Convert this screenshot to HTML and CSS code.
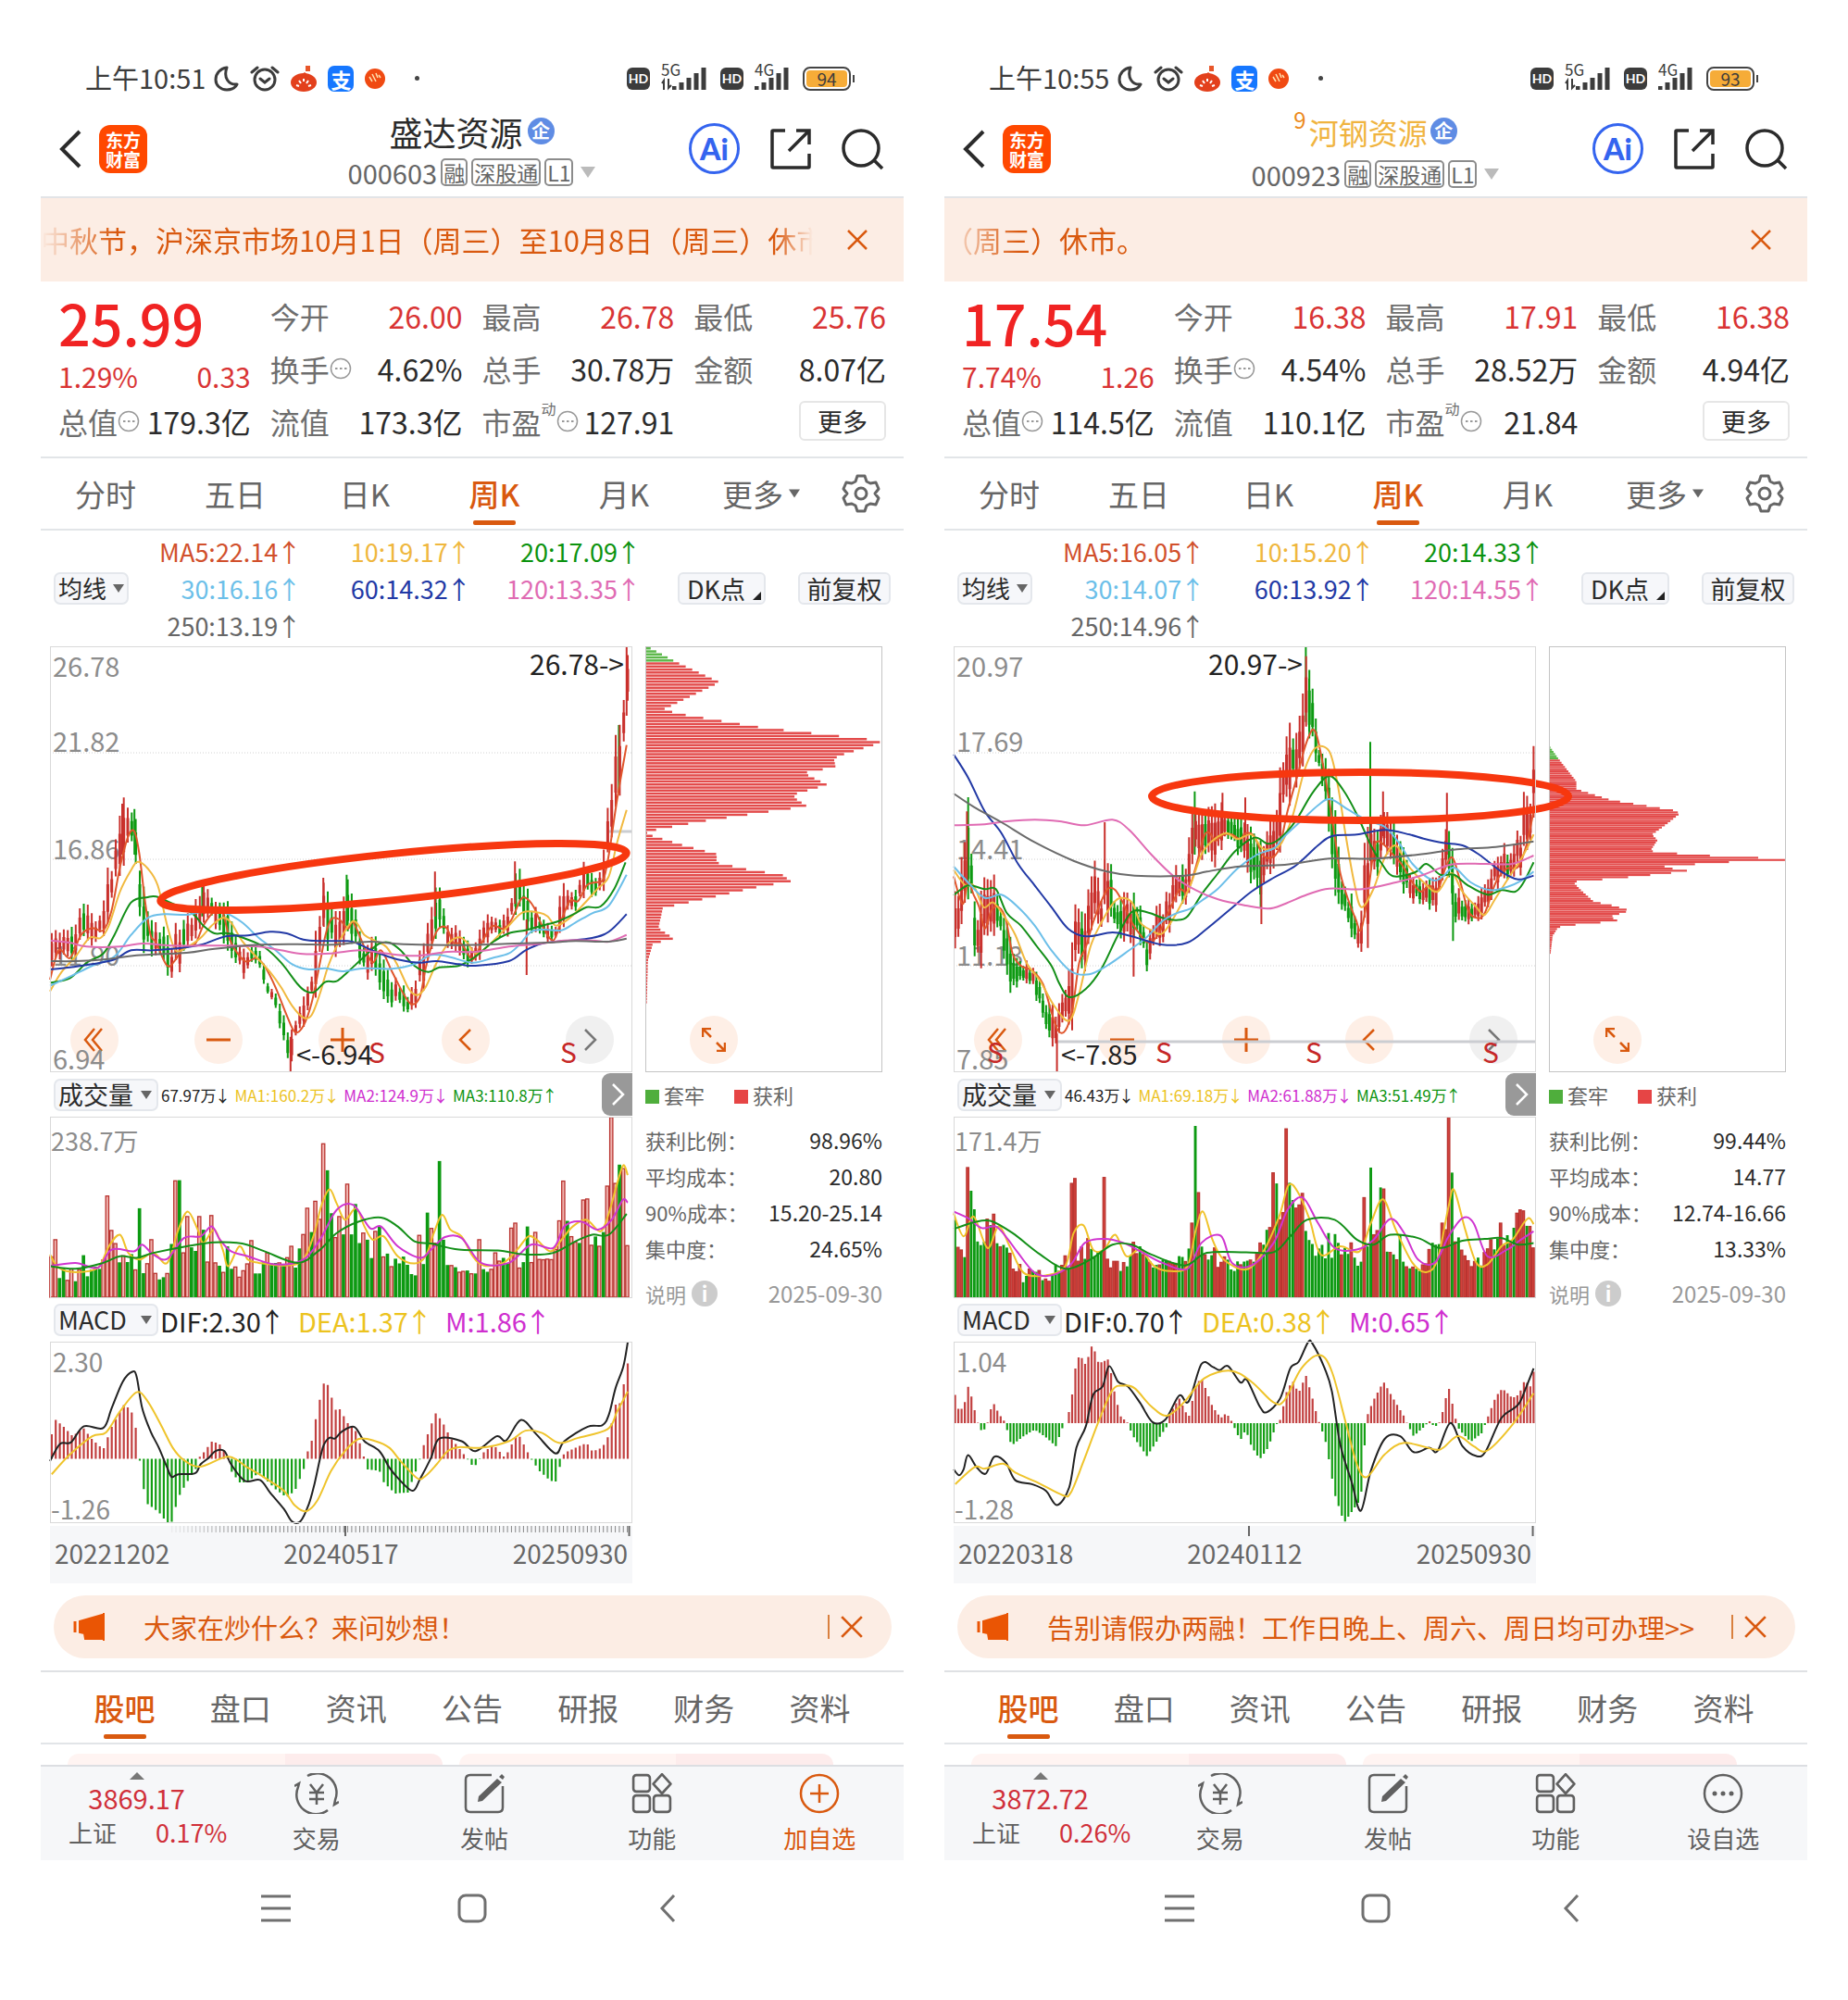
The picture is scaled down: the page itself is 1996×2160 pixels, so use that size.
FILE: index.html
```html
<!DOCTYPE html>
<html lang="zh-CN">
<head>
<meta charset="utf-8">
<title>个股行情对比</title>
<link rel="stylesheet" href="styles.css">
</head>
<body>
<svg class="sprite" aria-hidden="true">
  <symbol id="moon" viewBox="0 0 28 28"><path d="M15 2C8 3 3 8 3 15c0 6 5 11 12 11 5 0 9-2 11-6-9 1-15-7-11-18z" fill="none" stroke="currentColor" stroke-width="3" stroke-linejoin="round"/></symbol>
  <symbol id="alarm" viewBox="0 0 32 28"><g fill="none" stroke="currentColor" stroke-width="3" stroke-linecap="round"><circle cx="16" cy="15" r="11"/><path d="M2 7l6-5M30 7l-6-5M11 14l5 4 5-4"/></g></symbol>
  <symbol id="bag" viewBox="0 0 28 28"><path d="M16 0h5v6h-5z" fill="#e8562a"/><ellipse cx="14" cy="18" rx="14" ry="10" fill="#e3401c"/><path d="M10 11l5-4 5 4z" fill="#e3401c"/><path d="M6 21l3 1M9 16l2 3M14 14v3M19 16l-2 3M22 21l-3 1" stroke="#fff" stroke-width="2"/></symbol>
  <symbol id="pulse" viewBox="0 0 22 22"><circle cx="11" cy="11" r="11" fill="#f04a12"/><path d="M5 9l3 5M8 6l4 8M12 5l2 5M15 7l2 3" stroke="#ffe2b0" stroke-width="1.500" fill="none"/></symbol>
  <symbol id="signal" viewBox="0 0 40 26"><path d="M2 21v4M10 17v8M18 12v13M26 7v18M34 1v24" stroke="currentColor" stroke-width="5"/></symbol>
  <symbol id="updown" viewBox="0 0 12 14"><path d="M3 13V3L1 6M8 1v10l3-3" fill="none" stroke="currentColor" stroke-width="2"/></symbol>
  <symbol id="back" viewBox="0 0 24 42"><path d="M22 2L3 21l19 19" fill="none" stroke="currentColor" stroke-width="4"/></symbol>
  <symbol id="share" viewBox="0 0 46 46"><g fill="none" stroke="currentColor" stroke-width="3.500"><path d="M17 3H4q-1 0-1 1v38q0 1 1 1h38q1 0 1-1V28"/><path d="M21 25L42 4M29 3h14v15"/></g></symbol>
  <symbol id="search" viewBox="0 0 46 46"><g fill="none" stroke="currentColor" stroke-width="3.500"><circle cx="21" cy="22" r="19"/><path d="M35 35l9 9"/></g></symbol>
  <symbol id="close" viewBox="0 0 24 24"><path d="M2 2l20 20M22 2L2 22" stroke="currentColor" stroke-width="2.500"/></symbol>
  <symbol id="dots" viewBox="0 0 24 24"><circle cx="12" cy="12" r="10.500" fill="none" stroke="currentColor" stroke-width="1.500"/><path d="M6 12h2.500M11 12h2.500M16 12h2.500" stroke="currentColor" stroke-width="2"/></symbol>
  <symbol id="gear" viewBox="0 0 42 42"><g fill="none" stroke="currentColor" stroke-width="3" stroke-linejoin="round"><path d="M17 2h8l2 6 4 2 6-1 3 7-4 5 4 5-3 7-6-1-4 2-2 6h-8l-2-6-4-2-6 1-3-7 4-5-4-5 3-7 6 1 4-2z"/><circle cx="21" cy="21" r="6"/></g></symbol>
  <symbol id="down" viewBox="0 0 16 12"><path d="M0 0h16L8 12z" fill="currentColor"/></symbol>
  <symbol id="rewind" viewBox="0 0 26 26"><path d="M13 1L3 13l10 12M21 1L11 13l10 12" fill="none" stroke="currentColor" stroke-width="2.500"/></symbol>
  <symbol id="minus" viewBox="0 0 26 26"><path d="M0 13h26" stroke="currentColor" stroke-width="3"/></symbol>
  <symbol id="plus" viewBox="0 0 26 26"><path d="M0 13h26M13 0v26" stroke="currentColor" stroke-width="3"/></symbol>
  <symbol id="left" viewBox="0 0 26 26"><path d="M18 2L7 13l11 11" fill="none" stroke="currentColor" stroke-width="2.500"/></symbol>
  <symbol id="right" viewBox="0 0 26 26"><path d="M8 2l11 11L8 24" fill="none" stroke="currentColor" stroke-width="2.500"/></symbol>
  <symbol id="expand" viewBox="0 0 26 26"><path d="M1 10V1h9M1 1l9 9M25 16v9h-9M25 25l-9-9" fill="none" stroke="currentColor" stroke-width="2.500"/></symbol>
  <symbol id="horn" viewBox="0 0 36 30"><path d="M2 9v12" stroke="currentColor" stroke-width="3"/><path d="M7 9L31 2v26H13l-1-6-5-1zM33 0v30" fill="currentColor" stroke="currentColor" stroke-width="2"/></symbol>
  <symbol id="trade" viewBox="0 0 48 44"><g fill="none" stroke="currentColor" stroke-width="2.500"><path d="M14 3A21 21 0 0 1 44 29l-1 5 5-3M36 40A21 21 0 0 1 4 15l1-4-5 3"/><path d="M17 12l7 9 7-9M16 21h16M16 28h16M24 21v13"/></g></symbol>
  <symbol id="post" viewBox="0 0 44 44"><path d="M30 2H7Q2 2 2 7v30q0 5 5 5h30q5 0 5-5V14" fill="none" stroke="currentColor" stroke-width="2.500"/><path d="M36 6l5 4-21 20-5 1 1-6zM38 4l3-3 3 3-2 3z" fill="currentColor"/></symbol>
  <symbol id="apps" viewBox="0 0 42 42"><g fill="none" stroke="currentColor" stroke-width="2.500"><rect x="2" y="2" width="17" height="17" rx="3"/><rect x="2" y="23" width="17" height="17" rx="3"/><rect x="23" y="23" width="17" height="17" rx="3"/><path d="M31.500 1l9 10-9 10-9-10z" stroke-linejoin="round"/></g></symbol>
  <symbol id="add" viewBox="0 0 44 44"><g fill="none" stroke="currentColor" stroke-width="2.500"><circle cx="22" cy="22" r="20"/><path d="M12 22h20M22 12v20"/></g></symbol>
  <symbol id="more" viewBox="0 0 44 44"><circle cx="22" cy="22" r="20" fill="none" stroke="currentColor" stroke-width="2.500"/><g fill="currentColor"><circle cx="13" cy="22" r="2.500"/><circle cx="22" cy="22" r="2.500"/><circle cx="31" cy="22" r="2.500"/></g></symbol>
  <symbol id="menu" viewBox="0 0 32 32"><path d="M0 3h32M0 16h32M0 29h32" stroke="currentColor" stroke-width="3"/></symbol>
  <symbol id="home" viewBox="0 0 32 32"><rect x="2" y="2" width="28" height="28" rx="7" fill="none" stroke="currentColor" stroke-width="3"/></symbol>
  <symbol id="prev" viewBox="0 0 32 32"><path d="M22 2L9 16l13 14" fill="none" stroke="currentColor" stroke-width="3"/></symbol>
</svg>

<main class="pair">

<section class="phone">
  <div class="status">
    <span class="clock">上午10:51</span>
    <svg width="28" height="28"><use href="#moon"/></svg>
    <svg width="32" height="28"><use href="#alarm"/></svg>
    <svg width="28" height="28"><use href="#bag"/></svg>
    <span class="pay">支</span>
    <svg width="22" height="22"><use href="#pulse"/></svg>
    <span class="dot"></span>
    <span class="radio"><b class="hd">HD</b><span class="net"><i>5G</i><svg width="12" height="14"><use href="#updown"/></svg><svg width="40" height="26"><use href="#signal"/></svg></span><b class="hd">HD</b><span class="net"><i>4G</i><svg width="40" height="26"><use href="#signal"/></svg></span><span class="battery"><em>94</em></span></span>
  </div>
  <header class="top">
    <div class="top-left"><button aria-label="返回"><svg width="24" height="42"><use href="#back"/></svg></button><span class="logo">东方<br>财富</span></div>
    <div class="stock">
      <h1>盛达资源<span class="corp">企</span></h1>
      <p>000603<span class="tag">融</span><span class="tag">深股通</span><span class="tag">L1</span><svg width="16" height="12"><use href="#down"/></svg></p>
    </div>
    <div class="top-right"><button class="ai">Ai</button><button aria-label="分享"><svg width="46" height="46"><use href="#share"/></svg></button><button aria-label="搜索"><svg width="46" height="46"><use href="#search"/></svg></button></div>
  </header>
  <div class="ticker"><p>中秋节，沪深京市场10月1日（周三）至10月8日（周三）休市。</p><button aria-label="关闭"><svg width="24" height="24"><use href="#close"/></svg></button></div>
  <div class="quote">
    <div class="last"><strong>25.99</strong><div><span>1.29%</span><span>0.33</span></div></div>
    <div class="cell"><span>今开</span><b class="up">26.00</b></div>
    <div class="cell"><span>最高</span><b class="up">26.78</b></div>
    <div class="cell"><span>最低</span><b class="up">25.76</b></div>
    <div class="cell"><span>换手<svg width="24" height="24"><use href="#dots"/></svg></span><b>4.62%</b></div>
    <div class="cell"><span>总手</span><b>30.78万</b></div>
    <div class="cell"><span>金额</span><b>8.07亿</b></div>
    <div class="cell"><span>总值<svg width="24" height="24"><use href="#dots"/></svg></span><b>179.3亿</b></div>
    <div class="cell"><span>流值</span><b>173.3亿</b></div>
    <div class="cell"><span>市盈<sup>动</sup><svg width="24" height="24"><use href="#dots"/></svg></span><b>127.91</b></div>
    <div class="cell"><button class="more">更多</button></div>
  </div>
  <nav class="tabs"><button>分时</button><button>五日</button><button>日K</button><button class="on">周K</button><button>月K</button><button class="menu">更多<svg width="12" height="12"><use href="#down"/></svg></button><button aria-label="设置"><svg width="42" height="42"><use href="#gear"/></svg></button></nav>
  <div class="averages">
    <label class="drop small"><select aria-label="均线"><option>均线</option></select></label>
    <div class="ma"><span class="m5">MA5:22.14<i>↑</i></span><span class="m10">10:19.17<i>↑</i></span><span class="m20">20:17.09<i>↑</i></span><span class="m30">30:16.16<i>↑</i></span><span class="m60">60:14.32<i>↑</i></span><span class="m120">120:13.35<i>↑</i></span><span class="m250">250:13.19<i>↑</i></span></div>
    <button class="chip dk">DK点</button><button class="chip">前复权</button>
  </div>
  <div class="board">
    <div class="plots">
      <div class="kline" data-chart="a">
        <div class="tools"><button aria-label="最前"><svg width="26" height="26"><use href="#rewind"/></svg></button><button aria-label="缩小"><svg width="26" height="26"><use href="#minus"/></svg></button><button aria-label="放大"><svg width="26" height="26"><use href="#plus"/></svg></button><button aria-label="向前"><svg width="26" height="26"><use href="#left"/></svg></button><button class="off" aria-label="向后"><svg width="26" height="26"><use href="#right"/></svg></button></div>
      </div>
      <div class="legend vol"><label class="drop"><select aria-label="成交量"><option>成交量</option></select></label><span class="k">67.97万<i>↓</i></span><span class="y">MA1:160.2万<i>↓</i></span><span class="p">MA2:124.9万<i>↓</i></span><span class="g">MA3:110.8万<i>↑</i></span><button class="next" aria-label="展开"><svg width="26" height="26"><use href="#right"/></svg></button></div>
      <div class="volume" data-volume="a"></div>
      <div class="legend macd"><label class="drop"><select aria-label="指标"><option>MACD</option></select></label><span class="k">DIF:2.30<i>↑</i></span><span class="y">DEA:1.37<i>↑</i></span><span class="p">M:1.86<i>↑</i></span></div>
      <div class="macdplot" data-macd="a"></div>
      <div class="axis" data-axis="a"><span>20221202</span><span>20240517</span><span>20250930</span></div>
    </div>
    <aside class="chips">
      <div class="dist" data-dist="a"><button class="grow" aria-label="放大筹码"><svg width="26" height="26"><use href="#expand"/></svg></button></div>
      <div class="key"><span class="green">套牢</span><span class="red">获利</span></div>
      <dl><dt>获利比例：</dt><dd>98.96%</dd><dt>平均成本：</dt><dd>20.80</dd><dt>90%成本：</dt><dd>15.20-25.14</dd><dt>集中度：</dt><dd>24.65%</dd></dl>
      <div class="note"><span>说明</span><b>i</b><time>2025-09-30</time></div>
    </aside>
  </div>
  <div class="promo"><svg width="36" height="30"><use href="#horn"/></svg><a href="#">大家在炒什么？来问妙想！</a><button aria-label="关闭"><svg width="26" height="26"><use href="#close"/></svg></button></div>
  <nav class="tabs sections"><button class="on">股吧</button><button>盘口</button><button>资讯</button><button>公告</button><button>研报</button><button>财务</button><button>资料</button></nav>
  <div class="peek"><span></span><span></span></div>
  <footer class="bar">
    <div class="index"><svg width="16" height="8" viewBox="0 0 16 8"><path d="M8 0l8 8H0z" fill="#777"/></svg><b>3869.17</b><p><span>上证</span><em>0.17%</em></p></div>
    <button><svg width="48" height="44"><use href="#trade"/></svg>交易</button>
    <button><svg width="44" height="44"><use href="#post"/></svg>发帖</button>
    <button><svg width="44" height="44"><use href="#apps"/></svg>功能</button>
    <button class="hot"><svg width="44" height="44"><use href="#add"/></svg>加自选</button>
  </footer>
  <div class="system"><button aria-label="任务"><svg width="32" height="32"><use href="#menu"/></svg></button><button aria-label="主页"><svg width="32" height="32"><use href="#home"/></svg></button><button aria-label="返回"><svg width="32" height="32"><use href="#prev"/></svg></button></div>
</section>

<section class="phone">
  <div class="status">
    <span class="clock">上午10:55</span>
    <svg width="28" height="28"><use href="#moon"/></svg>
    <svg width="32" height="28"><use href="#alarm"/></svg>
    <svg width="28" height="28"><use href="#bag"/></svg>
    <span class="pay">支</span>
    <svg width="22" height="22"><use href="#pulse"/></svg>
    <span class="dot"></span>
    <span class="radio"><b class="hd">HD</b><span class="net"><i>5G</i><svg width="12" height="14"><use href="#updown"/></svg><svg width="40" height="26"><use href="#signal"/></svg></span><b class="hd">HD</b><span class="net"><i>4G</i><svg width="40" height="26"><use href="#signal"/></svg></span><span class="battery"><em>93</em></span></span>
  </div>
  <header class="top">
    <div class="top-left"><button aria-label="返回"><svg width="24" height="42"><use href="#back"/></svg></button><span class="logo">东方<br>财富</span></div>
    <div class="stock">
      <h1 class="gold"><sup>9</sup>河钢资源<span class="corp">企</span></h1>
      <p>000923<span class="tag">融</span><span class="tag">深股通</span><span class="tag">L1</span><svg width="16" height="12"><use href="#down"/></svg></p>
    </div>
    <div class="top-right"><button class="ai">Ai</button><button aria-label="分享"><svg width="46" height="46"><use href="#share"/></svg></button><button aria-label="搜索"><svg width="46" height="46"><use href="#search"/></svg></button></div>
  </header>
  <div class="ticker"><p>（周三）休市。</p><button aria-label="关闭"><svg width="24" height="24"><use href="#close"/></svg></button></div>
  <div class="quote">
    <div class="last"><strong>17.54</strong><div><span>7.74%</span><span>1.26</span></div></div>
    <div class="cell"><span>今开</span><b class="up">16.38</b></div>
    <div class="cell"><span>最高</span><b class="up">17.91</b></div>
    <div class="cell"><span>最低</span><b class="up">16.38</b></div>
    <div class="cell"><span>换手<svg width="24" height="24"><use href="#dots"/></svg></span><b>4.54%</b></div>
    <div class="cell"><span>总手</span><b>28.52万</b></div>
    <div class="cell"><span>金额</span><b>4.94亿</b></div>
    <div class="cell"><span>总值<svg width="24" height="24"><use href="#dots"/></svg></span><b>114.5亿</b></div>
    <div class="cell"><span>流值</span><b>110.1亿</b></div>
    <div class="cell"><span>市盈<sup>动</sup><svg width="24" height="24"><use href="#dots"/></svg></span><b>21.84</b></div>
    <div class="cell"><button class="more">更多</button></div>
  </div>
  <nav class="tabs"><button>分时</button><button>五日</button><button>日K</button><button class="on">周K</button><button>月K</button><button class="menu">更多<svg width="12" height="12"><use href="#down"/></svg></button><button aria-label="设置"><svg width="42" height="42"><use href="#gear"/></svg></button></nav>
  <div class="averages">
    <label class="drop small"><select aria-label="均线"><option>均线</option></select></label>
    <div class="ma"><span class="m5">MA5:16.05<i>↑</i></span><span class="m10">10:15.20<i>↑</i></span><span class="m20">20:14.33<i>↑</i></span><span class="m30">30:14.07<i>↑</i></span><span class="m60">60:13.92<i>↑</i></span><span class="m120">120:14.55<i>↑</i></span><span class="m250">250:14.96<i>↑</i></span></div>
    <button class="chip dk">DK点</button><button class="chip">前复权</button>
  </div>
  <div class="board">
    <div class="plots">
      <div class="kline" data-chart="b">
        <div class="tools"><button aria-label="最前"><svg width="26" height="26"><use href="#rewind"/></svg></button><button aria-label="缩小"><svg width="26" height="26"><use href="#minus"/></svg></button><button aria-label="放大"><svg width="26" height="26"><use href="#plus"/></svg></button><button aria-label="向前"><svg width="26" height="26"><use href="#left"/></svg></button><button class="off" aria-label="向后"><svg width="26" height="26"><use href="#right"/></svg></button></div>
      </div>
      <div class="legend vol"><label class="drop"><select aria-label="成交量"><option>成交量</option></select></label><span class="k">46.43万<i>↓</i></span><span class="y">MA1:69.18万<i>↓</i></span><span class="p">MA2:61.88万<i>↓</i></span><span class="g">MA3:51.49万<i>↑</i></span><button class="next" aria-label="展开"><svg width="26" height="26"><use href="#right"/></svg></button></div>
      <div class="volume" data-volume="b"></div>
      <div class="legend macd"><label class="drop"><select aria-label="指标"><option>MACD</option></select></label><span class="k">DIF:0.70<i>↑</i></span><span class="y">DEA:0.38<i>↑</i></span><span class="p">M:0.65<i>↑</i></span></div>
      <div class="macdplot" data-macd="b"></div>
      <div class="axis" data-axis="b"><span>20220318</span><span>20240112</span><span>20250930</span></div>
    </div>
    <aside class="chips">
      <div class="dist" data-dist="b"><button class="grow" aria-label="放大筹码"><svg width="26" height="26"><use href="#expand"/></svg></button></div>
      <div class="key"><span class="green">套牢</span><span class="red">获利</span></div>
      <dl><dt>获利比例：</dt><dd>99.44%</dd><dt>平均成本：</dt><dd>14.77</dd><dt>90%成本：</dt><dd>12.74-16.66</dd><dt>集中度：</dt><dd>13.33%</dd></dl>
      <div class="note"><span>说明</span><b>i</b><time>2025-09-30</time></div>
    </aside>
  </div>
  <div class="promo"><svg width="36" height="30"><use href="#horn"/></svg><a href="#">告别请假办两融！工作日晚上、周六、周日均可办理&gt;&gt;</a><button aria-label="关闭"><svg width="26" height="26"><use href="#close"/></svg></button></div>
  <nav class="tabs sections"><button class="on">股吧</button><button>盘口</button><button>资讯</button><button>公告</button><button>研报</button><button>财务</button><button>资料</button></nav>
  <div class="peek"><span></span><span></span></div>
  <footer class="bar">
    <div class="index"><svg width="16" height="8" viewBox="0 0 16 8"><path d="M8 0l8 8H0z" fill="#777"/></svg><b>3872.72</b><p><span>上证</span><em>0.26%</em></p></div>
    <button><svg width="48" height="44"><use href="#trade"/></svg>交易</button>
    <button><svg width="44" height="44"><use href="#post"/></svg>发帖</button>
    <button><svg width="44" height="44"><use href="#apps"/></svg>功能</button>
    <button><svg width="44" height="44"><use href="#more"/></svg>设自选</button>
  </footer>
  <div class="system"><button aria-label="任务"><svg width="32" height="32"><use href="#menu"/></svg></button><button aria-label="主页"><svg width="32" height="32"><use href="#home"/></svg></button><button aria-label="返回"><svg width="32" height="32"><use href="#prev"/></svg></button></div>
</section>

</main>
<script src="charts.js"></script>
</body>
</html>
```
FILE: styles.css
```css
* { box-sizing: border-box; margin: 0; padding: 0; }
body { background: #fff; color: #2b2b2b; font-family: "Noto Sans CJK SC", "Noto Sans", sans-serif; font-size: 32px; }
button, select { font: inherit; color: inherit; background: none; border: 0; }
i, em { font-style: normal; }
b { font-weight: 400; }
svg { display: block; flex: none; }
.sprite { position: absolute; width: 0; height: 0; }
.pair { display: grid; grid-template-columns: 1fr 1fr; gap: 44px; padding: 0 44px; }
.phone { min-width: 0; }

/* system status */
.status { display: flex; align-items: center; gap: 12px; height: 109px; padding: 60px 57px 0 48px; color: #3c3c3c; }
.clock { height: 42px; font-size: 29px; line-height: 38px; margin-right: -4px; }
.pay { width: 28px; height: 28px; border-radius: 7px; background: #1677ff; color: #fff; font-size: 22px; font-weight: 700; line-height: 28px; text-align: center; }
.dot { width: 5px; height: 5px; margin-left: 20px; border-radius: 50%; background: #444; }
.radio { display: flex; align-items: center; gap: 12px; margin-left: auto; }
.hd { width: 25px; height: 24px; border-radius: 6px; background: #3c3c3c; color: #fff; font: 700 14px/24px "Lato", sans-serif; text-align: center; }
.net { position: relative; display: flex; align-items: flex-end; }
.net i { position: absolute; left: 0; top: -6px; font-size: 17px; line-height: 17px; }
.battery { position: relative; width: 52px; height: 26px; padding: 2px; border: 2px solid #444; border-radius: 8px; }
.battery::after { content: ""; position: absolute; right: -6px; top: 7px; width: 2px; height: 8px; background: #444; }
.battery em { display: block; height: 18px; border-radius: 4px; background: #f6ac38; font-size: 19px; line-height: 18px; text-align: center; }

/* title bar */
.top { display: grid; grid-template-columns: 1fr auto 1fr; align-items: center; height: 105px; padding: 0 21px 0 20px; border-bottom: 2px solid #e2e4e7; }
.top-left, .top-right { display: flex; align-items: center; }
.top-left { gap: 19px; }
.top-right { gap: 32px; justify-content: flex-end; }
.logo { width: 52px; height: 52px; padding-top: 5px; border-radius: 12px; background: #ff4800; color: #fff; font-size: 19px; font-weight: 700; line-height: 21px; text-align: center; }
.ai { width: 55px; height: 55px; border: 3px solid #3464ef; border-radius: 50%; color: #3464ef; font: 900 32px/46px "Lato", sans-serif; }
.stock { padding-top: 4px; }
.stock h1 { display: flex; align-items: center; justify-content: center; gap: 5px; font-size: 36px; font-weight: 400; line-height: 46px; }
.stock .gold { gap: 3px; color: #f0b440; font-size: 32px; }
.gold sup { margin-bottom: 26px; color: #ec8a1c; font-size: 24px; line-height: 24px; }
.corp { width: 29px; height: 29px; border-radius: 50%; background: #5f8ce4; color: #fff; font-size: 20px; font-weight: 700; line-height: 28px; text-align: center; }
.stock p { display: flex; align-items: center; gap: 4px; color: #666; font-size: 29px; line-height: 42px; }
.tag { padding: 0 1px; border: 2px solid #8c8c8c; border-radius: 5px; font-size: 23px; line-height: 26px; }
.stock p svg { margin-left: 4px; color: #bbb; }

/* notice */
.ticker { display: flex; align-items: center; height: 90px; padding-right: 38px; background: #fcede4; color: #d9590f; }
.ticker p { flex: 1; min-width: 0; margin-right: 36px; overflow: hidden; font-size: 31px; line-height: 48px; white-space: nowrap; mask-image: linear-gradient(90deg, transparent, #000 80px, #000 calc(100% - 40px), transparent); }

/* quote */
.quote { display: grid; grid-template-columns: repeat(4, 1fr); grid-auto-rows: 57px; column-gap: 21px; padding: 8px 19px 10px 19px; border-bottom: 2px solid #e2e5e8; }
.last { grid-row: span 2; color: #d93434; }
.last strong { display: block; color: #f02323; font-size: 61px; font-weight: 500; line-height: 72px; }
.last div { display: flex; justify-content: space-between; font-size: 30px; line-height: 44px; }
.cell { display: flex; align-items: center; justify-content: space-between; white-space: nowrap; line-height: 44px; }
.cell span { display: flex; align-items: center; color: #6e6e6e; }
.cell svg { color: #999; }
.cell sup { align-self: flex-start; font-size: 16px; line-height: 16px; }
.up { color: #d93434; }
.cell .more { width: 94px; height: 43px; margin-left: auto; border: 2px solid #e6e6e6; border-radius: 6px; font-size: 27px; line-height: 39px; }

/* tab rows */
.tabs { display: grid; grid-template-columns: repeat(6, 140fr) 92fr; height: 78px; border-bottom: 2px solid #e2e5e8; color: #666; }
.tabs button { position: relative; display: flex; align-items: center; justify-content: center; min-width: 0; font-size: 33px; line-height: 44px; }
.tabs .menu { gap: 6px; padding-left: 16px; }
.tabs .on { color: #d9590f; font-weight: 500; }
.tabs .on::after { content: ""; position: absolute; bottom: 4px; width: 46px; height: 5px; border-radius: 2px; background: #d9590f; }
.sections { grid-template-columns: repeat(7, 1fr); height: 80px; padding: 0 28px; border-top: 2px solid #dfe1e4; }

/* moving averages */
.averages { display: flex; align-items: center; height: 125px; padding: 0 14px 0 14px; font-size: 27px; }
.drop { position: relative; flex: none; width: 113px; height: 35px; border: 2px solid #e4e7ec; border-radius: 7px; background: #f6f7fa; font-size: 27px; }
.drop select { display: block; width: 100%; height: 29px; padding-left: 3px; appearance: none; line-height: 29px; }
.drop::after { content: ""; position: absolute; right: 5px; top: 11px; border: 6px solid transparent; border-top: 9px solid #666; border-bottom: 0; pointer-events: none; }
.small { width: 81px; font-size: 26px; }
.small::after { right: 3px; }
.ma { display: grid; flex: 1; grid-template-columns: repeat(3, 1fr); line-height: 40px; }
.ma span { display: flex; justify-content: flex-end; }
.ma i, .legend i { display: flex; justify-content: center; width: 20px; margin-left: 2px; }
.m5 { color: #d1502c; } .m10 { color: #efb73e; } .m20 { color: #0c930f; } .m30 { color: #6cbfe9; }
.m60 { color: #2239a5; } .m120 { color: #e06bb3; } .m250 { color: #666; }
.chip { position: relative; width: 100px; height: 35px; margin-left: 35px; border: 2px solid #e4e7ec; border-radius: 6px; background: #f6f7fa; line-height: 30px; }
.dk { width: 95px; margin-left: 43px; padding-right: 12px; }
.dk::after { content: ""; position: absolute; right: 3px; bottom: 3px; border-left: 9px solid transparent; border-bottom: 9px solid #222; }

/* charts */
.board { display: grid; grid-template-columns: 629fr 256fr; gap: 14px; padding: 0 23px 0 10px; }
.board > * { min-width: 0; }
.kline, .dist { position: relative; }
.kline > svg, .volume > svg, .macdplot > svg, .dist > svg, .axis > svg { position: relative; width: 100%; height: auto; overflow: visible; pointer-events: none; }
.kline > svg { z-index: 2; }
.tools { position: absolute; left: 22px; right: 20px; bottom: 9px; display: flex; justify-content: space-between; }
.tools button, .grow { display: grid; place-items: center; width: 52px; height: 52px; border-radius: 50%; background: #feefe6; color: #d9590f; }
.tools .off { background: #f0f0f0; color: #777; }
.grow { position: absolute; left: 48px; bottom: 9px; }
.legend { display: flex; align-items: center; gap: 6px; height: 48px; padding-left: 4px; white-space: nowrap; }
.legend > span { display: flex; }
.vol > span { font-size: 17px; }
.vol i { width: 14px; margin: 0; }
.macd { gap: 18px; height: 47px; }
.macd > span { font-size: 29px; line-height: 40px; }
.legend .drop + span { margin-left: -3px; }
.macd .drop + span { margin-left: -16px; }
.k { color: #222; } .y { color: #ecc31f; } .p { color: #cf2fcf; } .g { color: #0c930f; }
.next { display: grid; place-items: center; width: 33px; height: 46px; margin-left: auto; border-radius: 9px 0 0 9px; background: #999; color: #fff; }
.axis { position: relative; display: grid; grid-template-columns: repeat(3, auto); grid-template-rows: 11px 38px; justify-content: space-between; height: 62px; margin-top: 3px; padding: 0 5px; background: #f6f7f9; color: #666; font-size: 28px; line-height: 36px; }
.axis > svg { grid-column: 1 / -1; width: calc(100% + 10px); margin: 0 -5px; }

/* cost distribution */
.key { display: flex; gap: 32px; height: 47px; align-items: center; color: #666; font-size: 22px; }
.key span::before { content: ""; display: inline-block; width: 15px; height: 15px; margin-right: 5px; background: #4fae3c; }
.key .red::before { background: #e64545; }
.chips dl { display: grid; grid-template-columns: auto auto; justify-content: space-between; padding-top: 7px; font-size: 23px; line-height: 39px; }
.chips dt { color: #666; font-size: 22px; }
.chips dd { text-align: right; }
.note { display: flex; align-items: center; gap: 6px; padding-top: 9px; color: #999; font-size: 22px; line-height: 40px; }
.note b { width: 28px; height: 28px; border-radius: 50%; background: #ccc; color: #fff; font-weight: 700; line-height: 27px; text-align: center; }
.note time { margin-left: auto; font-size: 24px; }

/* promotion */
.promo { display: flex; align-items: center; height: 68px; margin: 13px 13px 13px 14px; padding: 0 30px 0 21px; border-radius: 34px; background: #fcede4; color: #ea5504; }
.promo a { flex: 1; margin-left: 40px; color: #d9590f; font-size: 29px; text-decoration: none; white-space: nowrap; }
.promo button { padding-left: 11px; border-left: 2px solid #d9803f; color: #d9590f; }

/* bottom */
.peek { display: flex; gap: 18px; height: 22px; padding: 10px 76px 0 29px; }
.peek span { flex: 1; border-radius: 16px 16px 0 0; background: linear-gradient(90deg, #fff4f2 58%, #fdecec 58%); }
.bar { display: flex; height: 103px; border-top: 2px solid #dcdee2; background: #f6f7f9; color: #606060; font-size: 26px; }
.bar button { display: flex; flex: 181 0 0; flex-direction: column; align-items: center; padding-top: 7px; gap: 8px; line-height: 36px; }
.bar .hot { color: #d9590f; }
.index { display: flex; flex: 207 0 0; flex-direction: column; align-items: center; padding-top: 6px; }
.index b { color: #d0303a; font-size: 29px; line-height: 38px; }
.index p { display: flex; gap: 42px; padding-left: 24px; line-height: 38px; }
.index em { color: #d0303a; font-size: 27px; }
.system { display: flex; justify-content: center; gap: 180px; height: 151px; padding: 36px 0 83px; color: #707070; }
```
FILE: charts.js
```js
// Chart grid: horizontal units run 24..1071 over the plot, vertical units per panel.
const RED = '#c9302c', GREEN = '#0d9a12', LX = x => (x - 24) * 0.6;
const pts = s => s.trim().split(/\s+/).map(p => p.split(',').map(Number));
const noise = n => { const v = Math.sin(n * 127.1 + 11.7) * 43758.5453; return v - Math.floor(v); };

function at(rows, x, k = 1) {
  if (x <= rows[0][0]) return rows[0][k];
  for (let i = 1; i < rows.length; i++) {
    if (x <= rows[i][0]) {
      const a = rows[i - 1], b = rows[i], t = (x - a[0]) / (b[0] - a[0]);
      return a[k] + (b[k] - a[k]) * t;
    }
  }
  return rows[rows.length - 1][k];
}
function curve(s, ly, color, w = 2) {
  const p = pts(s).map(([x, y]) => [LX(x), ly(y)]);
  let d = `M${p[0]}`;
  for (let i = 0; i < p.length - 1; i++) {
    const a = p[i - 1] || p[i], b = p[i], c = p[i + 1], e = p[i + 2] || c;
    const f = n => n.toFixed(1);
    d += `C${f(b[0] + (c[0] - a[0]) / 6)},${f(b[1] + (c[1] - a[1]) / 6)} ${f(c[0] - (e[0] - b[0]) / 6)},${f(c[1] - (e[1] - b[1]) / 6)} ${f(c[0])},${f(c[1])}`;
  }
  return `<path d="${d}" fill="none" stroke="${color}" stroke-width="${w}" stroke-linejoin="round"/>`;
}
const label = (x, y, t, fill = '#8c8c8c', size = 29, extra = '') =>
  `<text x="${x}" y="${y}" font-size="${size}" fill="${fill}" ${extra}>${t.replace(/</g, '&lt;').replace(/>/g, '&gt;')}</text>`;
const frame = (h, body) => `<svg viewBox="0 0 629 ${h}">${body}<rect x="0.5" y="0.5" width="628" height="${h - 1}" fill="none" stroke="#d9d9d9"/></svg>`;

const DATA = {
  a: {
    step: 7.2, end: 1064, hollow: true, base: 1163,
    levels: ['26.78', '21.82', '16.86', '11.90', '6.94'],
    high: [620, '26.78->', 'end'], low: [266, '<-6.94'], s: [344, 551], rule: [604, 200],
    ring: '<ellipse cx="371" cy="249" rx="253" ry="25" transform="rotate(-5.9 371 249)"',
    range: '24,985,1105 35,930,1020 50,960,1030 70,940,1020 82,850,960 100,900,980 115,900,960 128,770,930 140,680,800 155,535,720 165,560,680 175,560,650 185,720,950 195,850,1000 210,900,1010 225,930,1060 240,1000,1085 255,900,1060 270,910,1020 290,840,980 300,810,950 315,815,920 330,850,930 342,860,1030 355,960,1050 372,1010,1095 390,980,1040 405,1000,1100 415,1110,1160 430,1140,1190 445,1220,1330 455,1280,1400 465,1230,1300 480,1180,1260 495,1080,1160 507,890,1110 516,780,950 525,840,990 540,900,1020 550,870,1000 558,770,950 568,830,980 580,960,1040 595,1010,1100 610,960,1070 625,1060,1160 640,1100,1190 655,1110,1190 667,1160,1220 680,1130,1210 690,1010,1140 703,910,1080 717,760,940 725,820,940 740,940,1000 760,940,1020 785,1010,1075 800,930,1030 818,890,950 835,910,960 850,880,950 861,730,900 875,770,900 890,860,940 905,890,960 920,930,980 935,930,980 945,800,950 960,800,880 975,800,880 983,710,820 990,700,830 1000,770,840 1015,740,810 1025,640,790 1033,440,620 1040,380,580 1048,280,500 1055,230,400 1062,25,250',
    spikes: [[882, 910, 1090, 1], [717, 755, 900, 1], [558, 765, 930, 0], [516, 775, 930, 1], [861, 722, 860, 1], [298, 805, 900, 0], [176, 552, 700, 0], [154, 535, 700, 1], [457, 1290, 1405, 1], [1048, 280, 500, 0], [1062, 25, 250, 1]],
    ma: {
      '#e0552c': '24,1105 40,1010 60,1035 80,960 100,938 120,945 135,880 150,740 165,640 176,625 185,700 195,850 205,960 215,985 235,1060 250,1040 265,1000 285,990 300,930 320,885 335,890 350,985 375,1045 395,1035 410,1060 430,1130 450,1220 465,1275 480,1255 495,1180 510,1050 520,960 530,910 545,910 560,940 570,920 590,1000 605,1050 620,1010 640,1080 660,1150 675,1185 690,1160 700,1070 715,970 725,938 738,938 750,985 765,990 785,1040 800,990 815,940 825,930 840,940 855,910 870,850 880,840 895,870 910,930 930,978 945,910 960,850 975,850 990,800 1005,790 1020,780 1030,700 1045,520 1062,345',
      '#f1b93f': '24,1143 45,1080 70,1030 95,970 115,970 130,930 150,820 170,750 182,723 200,745 218,800 235,930 250,1010 270,1000 295,970 315,930 335,905 350,920 370,980 400,1040 420,1080 440,1130 460,1190 480,1228 495,1220 510,1150 525,1060 545,980 570,915 590,960 610,980 630,1000 650,1060 670,1135 685,1155 700,1130 720,1050 740,990 760,968 775,985 790,1020 810,1000 830,965 850,930 875,887 905,888 920,900 935,930 960,905 985,860 1010,810 1030,770 1045,660 1062,555',
      '#138f18': '24,1115 60,1100 90,1050 120,1020 140,960 170,855 200,838 215,836 240,855 280,890 300,930 320,955 345,955 380,975 410,1000 440,1050 470,1120 485,1143 500,1145 520,1112 540,1110 560,1080 590,1030 615,990 635,985 655,1010 680,1060 705,1080 725,1065 760,1060 790,1030 820,985 850,955 880,945 910,930 940,915 970,890 990,870 1015,868 1040,810 1060,725',
      '#6cbfe9': '24,1125 60,1095 100,1060 140,1030 170,960 200,905 230,893 270,895 300,885 340,890 370,920 400,970 430,1010 460,1055 490,1072 520,1068 550,1078 590,1068 640,1070 680,1055 710,1025 740,1030 785,1050 820,1035 850,1020 870,990 890,950 915,943 945,945 970,920 1000,890 1030,865 1062,765',
      '#2239a5': '24,1072 60,1065 100,1055 140,1040 170,1010 210,1010 270,1000 300,990 340,965 380,962 420,950 450,955 480,975 510,980 560,980 580,990 610,1015 650,1040 690,1050 720,1045 760,1055 790,1060 850,1045 880,1010 910,988 950,980 1000,970 1030,950 1062,893',
      '#e06bb3': '24,978 60,985 90,998 150,998 190,988 240,995 300,995 350,995 400,998 440,1010 480,1022 530,1020 580,1010 620,1018 680,1028 740,1015 790,1015 850,998 900,990 950,978 1000,978 1030,982 1062,960',
      '#6b6b6b': '24,1045 70,1045 130,1038 180,1026 270,1018 320,1005 400,992 470,990 530,992 600,982 660,990 760,993 860,988 920,985 970,980 1030,982 1062,972'
    },
    vmax: '238.7万',
    vol: '24,570 60,610 110,590 130,530 160,550 200,590 230,600 270,530 300,540 330,590 380,590 420,590 470,560 480,480 500,440 515,450 540,520 570,460 600,530 640,560 690,590 720,520 760,580 800,590 850,570 900,560 930,560 950,510 1000,500 1025,490 1040,340 1062,350',
    vspikes: '33,500,1 84,547,0 127,368,1 134,472,1 142,512,1 185,405,0 206,500,1 242,513,0 249,322,1 256,320,0 271,430,1 293,430,1 300,470,0 315,427,1 387,503,1 344,520,0 415,540,1 459,520,1 487,405,1 502,384,1 516,210,1 523,290,0 530,420,0 545,430,1 559,332,1 573,392,0 588,480,1 610,475,1 617,460,0 689,487,1 703,418,0 711,466,1 725,262,0 732,500,0 797,500,1 826,540,1 854,465,1 862,450,1 884,460,0 898,478,1 941,443,1 948,323,1 955,443,0 984,380,1 991,377,1 1027,338,1 1034,130,1 1041,330,1 1048,273,0 1056,285,1 1064,518,1',
    vma: {
      '#f0c22a': '24,545 40,585 70,598 110,585 130,520 150,485 165,540 185,560 210,540 235,570 255,470 272,415 290,470 300,510 320,470 335,530 345,580 365,520 380,560 400,570 450,578 480,560 500,480 512,400 527,348 540,390 555,440 575,405 590,460 605,500 625,490 650,550 680,572 700,550 715,480 730,425 745,470 765,490 785,550 805,578 840,570 865,530 885,490 900,500 925,535 945,500 965,460 990,440 1015,475 1030,420 1045,330 1056,275 1064,305',
      '#d035d0': '24,580 70,570 110,585 135,530 175,535 190,515 210,545 235,558 265,495 295,490 315,460 330,500 350,535 380,550 430,575 480,560 510,500 540,410 570,395 600,465 620,460 650,520 690,555 710,530 735,492 765,495 800,570 850,570 890,515 930,525 950,460 980,445 1010,470 1035,440 1055,380 1064,388',
      '#138f18': '24,580 70,588 120,570 150,550 180,555 210,540 270,520 320,508 370,512 410,535 470,570 510,530 540,480 580,445 620,433 650,460 680,505 710,512 760,530 830,533 880,545 930,540 970,505 1000,485 1030,485 1062,422'
    },
    mrange: ['2.30', '-1.26'],
    hist: '27,1090 34,1045 48,1065 65,1095 84,1070 100,1105 120,1135 134,1070 150,1020 157,1000 170,1015 180,1080 184,1163 186,1170 192,1250 200,1300 220,1325 235,1357 243,1355 255,1280 270,1235 288,1190 292,1160 300,1145 316,1110 330,1120 345,1160 350,1200 365,1235 378,1235 400,1205 430,1255 450,1280 465,1260 483,1185 486,1150 495,1110 505,1020 516,935 524,940 538,1015 545,1012 560,1055 575,1080 590,1163 596,1195 617,1200 625,1235 645,1268 668,1265 685,1190 690,1163 695,1130 718,1025 730,1050 745,1100 760,1130 775,1163 785,1185 795,1180 800,1150 822,1120 843,1160 866,1085 880,1130 890,1163 905,1200 925,1230 935,1232 945,1165 950,1145 990,1115 1000,1140 1012,1135 1025,1115 1034,1065 1042,1000 1050,995 1056,945 1064,875',
    dif: '24,1170 42,1118 62,1113 85,1065 120,1070 135,1010 155,930 172,900 180,915 190,1010 205,1080 220,1130 235,1190 243,1218 255,1210 285,1207 295,1180 310,1160 322,1140 338,1140 350,1180 375,1230 402,1227 420,1265 445,1315 460,1353 475,1352 490,1300 500,1240 515,1130 527,1100 537,1102 550,1080 572,1067 590,1110 617,1140 635,1190 655,1230 677,1260 690,1225 710,1160 725,1102 765,1110 790,1140 828,1095 845,1108 872,1046 900,1090 934,1147 950,1110 992,1066 1018,1062 1030,1030 1042,950 1056,885 1064,811',
    dea: '27,1210 60,1150 100,1095 125,1083 150,1020 180,962 200,990 225,1065 245,1130 265,1167 295,1187 345,1157 380,1190 410,1220 445,1260 465,1305 485,1322 505,1290 530,1200 555,1140 580,1103 610,1110 635,1130 655,1170 685,1222 700,1215 720,1180 740,1140 760,1128 800,1130 850,1110 880,1078 910,1085 940,1115 975,1100 1028,1073 1045,1020 1064,960',
    cost: '28,8 73,55 138,133 227,30 245,75 285,210 325,415 334,426 345,405 373,355 385,340 412,343 432,285 470,328 500,270 512,268 540,292 560,210 590,95 618,12 627,0 636,12 665,65 695,128 722,127 745,185 762,247 783,262 800,205 850,80 862,48 870,30 935,22 968,50 985,12 1040,3 1180,1',
    trapped: 76, pitch: 9.8, ticks: true
  },
  b: {
    step: 5.85, end: 1068, hollow: false, base: 1055,
    levels: ['20.97', '17.69', '14.41', '11.13', '7.85'],
    high: [377, '20.97->', 'end'], low: [116, '<-7.85'], s: [36, 218, 380, 571], rule: [112, 427],
    ring: '<ellipse cx="439" cy="162" rx="225" ry="26"',
    range: '24,840,1090 32,800,960 48,565,900 55,580,850 60,890,1060 70,880,1040 80,790,1010 95,715,920 110,900,960 122,930,1130 135,1040,1120 150,1050,1110 168,1060,1140 180,1120,1190 192,1180,1270 204,1200,1370 212,1180,1310 225,1160,1240 238,940,1220 245,880,1000 260,920,1060 270,780,970 278,740,880 290,830,920 297,700,880 305,730,900 318,870,950 335,830,970 345,850,1000 358,860,960 372,960,1060 388,880,1000 400,880,970 415,770,920 428,740,850 445,740,900 457,500,740 465,520,680 480,570,700 495,560,760 510,530,640 525,560,660 540,560,730 552,570,740 565,630,830 578,640,850 590,640,760 600,570,750 608,490,690 620,320,560 630,290,500 640,330,470 652,190,410 660,30,270 668,160,340 680,340,410 690,400,490 700,420,600 712,610,830 725,800,880 740,840,960 755,970,1025 768,530,960 778,560,740 790,600,740 800,570,680 815,610,730 830,660,790 845,760,860 860,790,850 880,770,860 895,790,870 905,650,780 918,590,760 925,790,900 940,840,920 955,860,920 970,840,920 985,750,880 1000,700,800 1015,670,780 1030,680,760 1045,600,740 1053,490,650 1062,520,680 1068,350,580',
    spikes: [[296, 595, 800, 1], [348, 940, 1095, 1], [508, 500, 640, 1], [549, 515, 640, 1], [578, 700, 925, 1], [774, 335, 720, 0], [797, 495, 640, 1], [912, 500, 700, 1], [923, 800, 980, 0], [48, 560, 800, 1], [458, 495, 700, 0], [658, 25, 270, 0], [664, 130, 300, 0], [210, 1280, 1405, 1], [1068, 348, 580, 1]],
    ma: {
      '#e0552c': '24,770 40,860 50,790 60,830 70,870 80,940 92,880 105,870 118,910 130,1020 145,1060 165,1075 185,1120 200,1210 212,1270 225,1270 238,1200 250,1050 262,1000 275,920 290,850 302,810 315,815 330,860 345,920 360,960 375,985 392,960 410,890 430,815 445,820 460,740 475,640 485,630 495,655 510,635 525,635 540,650 550,630 565,640 580,700 595,710 610,680 625,560 645,430 655,360 665,310 672,295 680,330 695,470 710,640 720,760 735,850 748,910 757,945 768,850 780,690 787,657 800,670 815,700 830,730 850,790 865,820 880,800 895,815 910,740 922,710 935,780 950,880 965,905 980,890 1000,790 1020,745 1040,740 1055,670 1068,560',
      '#f1b93f': '24,750 45,800 60,800 78,870 95,855 115,900 135,960 155,1050 180,1110 205,1190 232,1238 250,1150 270,1000 290,920 310,860 325,840 345,855 360,920 380,945 400,955 425,890 450,800 470,700 490,655 515,630 535,650 560,635 580,680 600,680 615,660 635,570 655,430 675,355 700,365 715,470 730,640 745,790 758,870 780,810 800,710 820,670 840,730 870,790 895,820 920,760 940,820 965,870 980,895 1000,840 1025,770 1050,700 1068,635',
      '#138f18': '24,832 50,800 80,812 100,812 120,890 145,930 175,1000 200,1060 215,1120 232,1162 262,1135 290,1070 320,960 345,885 375,888 400,905 425,912 445,900 470,830 500,760 530,690 565,645 590,665 610,650 640,590 670,500 700,445 725,490 750,570 775,670 795,730 815,770 855,757 875,730 900,765 925,765 950,800 985,830 1010,815 1035,820 1050,790 1068,725',
      '#6cbfe9': '24,738 50,790 80,840 110,830 140,870 170,930 200,1010 235,1078 268,1088 300,1060 340,1010 370,970 400,915 425,890 450,875 470,850 500,810 535,745 570,700 600,680 620,640 650,590 680,540 702,520 735,555 770,590 800,610 825,660 850,730 885,782 905,770 925,742 955,790 990,815 1020,805 1045,785 1068,755',
      '#2239a5': '24,375 50,450 80,560 110,630 140,730 170,800 200,870 230,940 262,965 310,952 345,965 400,992 445,985 480,940 520,880 560,820 600,775 640,735 680,670 705,640 750,635 800,620 845,635 870,648 905,662 940,670 970,700 1010,755 1040,780 1068,768',
      '#e06bb3': '24,605 80,602 120,592 170,587 215,592 260,605 310,587 340,620 380,700 420,770 460,815 500,845 550,865 590,875 620,860 660,830 700,810 760,812 820,790 870,765 920,732 980,730 1030,730 1068,703',
      '#6b6b6b': '24,502 60,545 110,595 170,660 240,720 300,755 350,768 440,768 480,755 540,738 620,733 700,713 780,713 860,700 930,683 1000,675 1068,657'
    },
    vmax: '171.4万',
    vol: '30,540 60,520 90,470 120,530 150,610 200,600 235,560 270,530 320,570 380,560 420,570 450,540 470,530 500,560 540,590 570,560 580,500 600,440 625,420 650,430 680,540 720,520 750,560 790,480 820,540 860,590 890,520 910,450 935,520 960,590 1000,520 1040,470 1068,480',
    vspikes: '27,440,0 48,282,1 54,352,0 60,408,0 83,438,1 95,423,1 240,330,1 245,315,1 296,312,1 268,497,1 348,508,1 361,520,0 452,450,1 458,156,0 464,358,1 492,525,1 602,298,1 608,330,0 614,440,1 626,165,1 631,328,0 637,380,0 649,395,1 655,360,1 700,480,0 711,483,0 740,510,1 763,373,1 774,282,0 792,342,0 798,347,1 826,485,0 890,515,0 902,450,1 907,375,1 913,130,1 924,297,0 936,493,0 990,500,1 1011,450,1 1040,420,1 1046,410,1 1052,413,1 1057,458,0 1063,460,1 1068,525,1',
    vma: {
      '#f0c22a': '24,420 42,490 60,430 85,525 105,460 125,520 150,600 190,608 225,580 240,480 258,457 275,530 295,530 315,485 335,550 360,530 385,580 415,595 445,580 460,470 473,415 490,500 510,560 550,590 580,540 610,430 627,335 645,360 665,440 685,545 720,520 755,535 775,450 797,378 820,470 850,570 875,598 895,560 915,400 925,350 945,470 965,570 985,575 1010,520 1030,500 1050,450 1060,435 1068,453',
      '#d035d0': '24,415 50,435 75,465 100,460 120,495 140,540 170,600 200,608 235,575 260,510 295,498 330,510 360,535 400,570 445,588 470,510 505,488 525,570 560,578 600,510 625,410 652,372 680,450 710,525 750,530 780,500 810,437 835,480 860,560 890,570 915,490 940,435 960,450 985,550 1020,530 1045,500 1068,475',
      '#138f18': '24,468 60,448 90,443 130,480 180,545 225,588 270,560 310,515 345,515 380,545 440,578 480,540 550,538 600,538 630,490 660,440 710,440 750,500 780,515 810,485 860,495 900,525 940,503 980,498 1010,495 1040,515 1068,510'
    },
    mrange: ['1.04', '-1.28'],
    hist: '27,970 33,1015 42,1010 50,945 57,980 66,1048 68,1055 74,1078 83,1072 88,1030 95,992 105,1025 113,1045 118,1055 124,1110 132,1118 150,1095 170,1075 190,1098 208,1125 222,1060 226,1055 235,1000 245,865 252,850 262,880 274,815 285,875 303,862 315,975 325,1035 338,1055 345,1090 372,1155 390,1110 408,1065 412,1030 430,980 447,1040 460,940 470,918 490,1005 505,1040 515,1025 523,1045 527,1060 540,1108 550,1075 560,1125 575,1165 590,1130 605,1060 612,1045 625,950 635,930 645,965 658,910 670,980 680,1045 684,1060 695,1120 710,1270 727,1357 740,1325 757,1285 766,1070 768,1035 780,985 798,930 815,980 835,1035 840,1055 852,1095 872,1065 880,1048 890,1068 898,1055 903,1030 915,945 928,1045 934,1075 955,1112 975,1085 985,1040 1000,975 1012,950 1030,980 1042,968 1052,925 1062,945 1068,900',
    dif: '24,1195 34,1213 42,1195 50,1152 66,1190 82,1208 97,1157 118,1175 135,1228 165,1240 190,1260 210,1303 232,1250 245,1130 262,1065 275,970 292,945 304,883 320,930 338,945 360,995 382,1052 405,1045 430,972 447,990 470,877 490,885 503,895 518,883 540,932 552,925 575,1005 588,1022 612,980 630,890 645,870 662,811 670,815 692,890 705,960 720,1120 740,1230 757,1320 775,1200 800,1103 828,1095 852,1143 880,1130 895,1140 918,1055 940,1125 965,1155 982,1140 1010,1040 1040,1000 1055,945 1068,890',
    dea: '27,1240 62,1188 80,1193 113,1178 135,1205 175,1235 220,1273 235,1265 258,1170 285,1050 310,955 330,942 350,950 380,1005 408,1033 440,990 475,920 522,897 560,930 600,993 620,985 650,890 683,850 705,900 730,1055 750,1180 768,1218 800,1150 835,1115 890,1135 905,1130 932,1095 960,1125 985,1138 1030,1060 1068,965',
    cost: '350,1 385,15 460,48 485,48 520,110 555,230 566,234 600,210 632,185 650,195 685,182 690,205 700,290 708,390 714,426 722,310 736,200 750,252 768,155 785,42 810,55 850,80 860,110 878,145 898,110 912,124 925,40 932,15 960,5 1020,1',
    trapped: 386, pitch: 7, ticks: false
  }
};

const put = (sel, html) => document.querySelector(sel).insertAdjacentHTML('afterbegin', html);

for (const [id, d] of Object.entries(DATA)) {
  // candles and averages
  const ky = y => (y - 25) / 3;
  let out = [115, 230, 345].map(y => `<path d="M0 ${y}H629" stroke="#d2d2d2" stroke-dasharray="1 2"/>`).join('');
  d.levels.forEach((t, i) => { out += label(3, [33, 114, 230, 345, 457][i], t); });
  out += `<path d="M${d.rule[0]} ${d.rule[1]}H629" stroke="#cbcdd1" stroke-width="3"/>`;
  const range = pts(d.range), wick = ['', ''], body = ['', ''];
  for (let x = d.end, i = 0; x > 24; x -= d.step, i++) {
    const hi = at(range, x, 1), lo = at(range, x, 2), len = lo - hi;
    const h = Math.max(25, hi + (noise(i) - 0.45) * len * 0.5), l = lo - (noise(i + 400) - 0.45) * len * 0.5;
    const slope = at(range, x + 8, 1) + at(range, x + 8, 2) - at(range, x - 8, 1) - at(range, x - 8, 2);
    const up = -slope / 260 + noise(i + 900) - 0.45 > 0 ? 1 : 0, n = l - h, X = LX(x).toFixed(1);
    wick[up] += `M${X} ${ky(h).toFixed(1)}V${ky(l).toFixed(1)}`;
    body[up] += `M${X} ${ky(h + n * 0.3).toFixed(1)}V${ky(l - n * 0.2).toFixed(1)}`;
  }
  d.spikes.forEach(([x, h, l, up]) => { wick[up] += `M${LX(x)} ${ky(h)}V${ky(l)}`; });
  [GREEN, RED].forEach((c, i) => { out += `<path d="${wick[i]}" stroke="${c}" stroke-width="2"/><path d="${body[i]}" stroke="${c}" stroke-width="3"/>`; });
  for (const [c, s] of Object.entries(d.ma)) out += curve(s, ky, c);
  out += label(d.high[0], 31, d.high[1], '#222', 30, 'text-anchor="end"') + label(d.low[0], 452, d.low[1], '#222');
  d.s.forEach(x => { out += label(x, 450, 'S', '#c62828', 30); });
  out += d.ring + ' fill="none" stroke="#f7370f" stroke-width="8"/>';
  put(`[data-chart="${id}"]`, frame(460, out));

  // volume
  const vy = y => (y - 128) / 2.8, vb = pts(d.vol), tall = pts(d.vspikes);
  out = '';
  for (let x = d.end, i = 0; x > 24; x -= d.step, i++) {
    const near = tall.find(t => Math.abs(t[0] - x) <= d.step / 2);
    const top = near ? near[1] : Math.min(655, at(vb, x) + (noise(i + 50) - 0.45) * 50);
    const up = near ? near[2] : (noise(i + 70) > 0.52 ? 1 : 0), y = vy(top), w = d.step * 0.6;
    const left = (LX(x) - w / 2).toFixed(1), height = (195 - y).toFixed(1);
    out += up
      ? `<rect x="${left}" y="${y.toFixed(1)}" width="${(w - 1).toFixed(1)}" height="${height}" fill="${d.hollow ? '#f0b4b0' : '#d4433d'}" stroke="#b93430" stroke-width="1.3"/>`
      : `<rect x="${left}" y="${y.toFixed(1)}" width="${(w - 0.6).toFixed(1)}" height="${height}" fill="${GREEN}"/>`;
  }
  for (const [c, s] of Object.entries(d.vma)) out += curve(s, vy, c);
  out += label(1, 37, d.vmax, '#8c8c8c', 27);
  put(`[data-volume="${id}"]`, frame(196, out));

  // macd
  const my = y => (y - 809) / 2.8, hist = pts(d.hist), bars = ['', ''];
  for (let x = d.end; x > 24; x -= d.step) {
    const y = at(hist, x), up = y < d.base ? 1 : 0;
    bars[up] += `M${LX(x).toFixed(1)} ${my(d.base).toFixed(1)}V${my(y).toFixed(1)}`;
  }
  out = `<path d="${bars[0]}" stroke="#149f14" stroke-width="2.2"/><path d="${bars[1]}" stroke="#c24040" stroke-width="2.2"/>`;
  out += curve(d.dif, my, '#222') + curve(d.dea, my, '#efc42c');
  out += label(3, 33, d.mrange[0], '#8c8c8c', 28) + label(1, 192, d.mrange[1], '#8c8c8c', 28);
  put(`[data-macd="${id}"]`, frame(196, out));

  // time axis ticks
  out = `<path d="M319 0V11M626 0V11" stroke="#666" stroke-width="2"/>`;
  if (d.ticks) for (let x = 624; x > 128; x -= 4.32) out += `<path d="M${x.toFixed(1)} 0V7" stroke="#888" opacity="${Math.min(1, (x - 120) / 90).toFixed(2)}"/>`;
  put(`[data-axis="${id}"]`, `<svg viewBox="0 0 629 11">${out}</svg>`);

  // cost distribution
  const cost = pts(d.cost);
  out = '';
  for (let y = cost[0][0]; y < cost[cost.length - 1][0]; y += d.pitch) {
    out += `<rect x="1" y="${ky(y).toFixed(1)}" width="${(at(cost, y) * 0.596).toFixed(1)}" height="${d.pitch / 3 - (d.ticks ? 0.8 : 0.2)}" fill="${y < d.trapped ? '#5cb84a' : '#e34b4b'}"/>`;
  }
  put(`[data-dist="${id}"]`, `<svg viewBox="0 0 256 460">${out}<rect x="0.5" y="0.5" width="255" height="459" fill="none" stroke="#c4c4c4"/></svg>`);
}
```
